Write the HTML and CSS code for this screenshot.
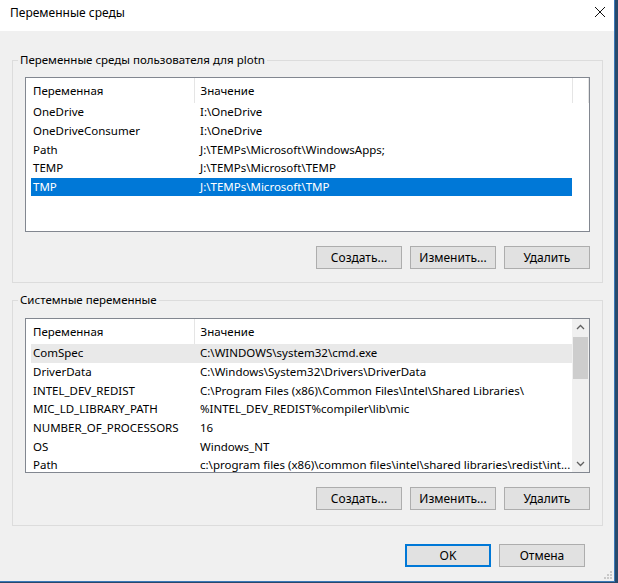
FILE: index.html
```html
<!DOCTYPE html>
<html lang="ru">
<head>
    <meta charset="UTF-8">
    <title>Переменные среды</title>
    <link rel="stylesheet" href="styles.css">
</head>
<body>
    <div class="window">
        <div class="titlebar">
            <span class="title">Переменные среды</span>
            <svg class="close" width="12" height="12" viewBox="0 0 12 12">
                <path d="M1 1 L11 11 M11 1 L1 11" stroke="#111" stroke-width="1" fill="none"/>
            </svg>
        </div>

        <div class="content">
            <fieldset class="group">
                <legend>Переменные среды пользователя для plotn</legend>
                <div class="list">
                    <div class="list-body">
                        <table>
                            <colgroup><col class="c1"><col class="c2"><col></colgroup>
                            <thead>
                                <tr><th>Переменная</th><th>Значение</th><th></th></tr>
                            </thead>
                            <tbody>
                                <tr><td>OneDrive</td><td>I:\OneDrive</td><td></td></tr>
                                <tr><td>OneDriveConsumer</td><td>I:\OneDrive</td><td></td></tr>
                                <tr><td>Path</td><td>J:\TEMPs\Microsoft\WindowsApps;</td><td></td></tr>
                                <tr><td>TEMP</td><td>J:\TEMPs\Microsoft\TEMP</td><td></td></tr>
                                <tr class="selected"><td>TMP</td><td>J:\TEMPs\Microsoft\TMP</td><td></td></tr>
                            </tbody>
                        </table>
                    </div>
                </div>
                <div class="buttons">
                    <button>Создать...</button>
                    <button>Изменить...</button>
                    <button>Удалить</button>
                </div>
            </fieldset>

            <fieldset class="group system">
                <legend>Системные переменные</legend>
                <div class="list">
                    <div class="list-body">
                        <table>
                            <colgroup><col class="c1"><col class="c2"><col></colgroup>
                            <thead>
                                <tr><th>Переменная</th><th>Значение</th><th class="last"></th></tr>
                            </thead>
                            <tbody>
                                <tr class="hover"><td>ComSpec</td><td>C:\WINDOWS\system32\cmd.exe</td><td></td></tr>
                                <tr><td>DriverData</td><td>C:\Windows\System32\Drivers\DriverData</td><td></td></tr>
                                <tr><td>INTEL_DEV_REDIST</td><td>C:\Program Files (x86)\Common Files\Intel\Shared Libraries\</td><td></td></tr>
                                <tr><td>MIC_LD_LIBRARY_PATH</td><td>%INTEL_DEV_REDIST%compiler\lib\mic</td><td></td></tr>
                                <tr><td>NUMBER_OF_PROCESSORS</td><td>16</td><td></td></tr>
                                <tr><td>OS</td><td>Windows_NT</td><td></td></tr>
                                <tr><td>Path</td><td>c:\program files (x86)\common files\intel\shared libraries\redist\int...</td><td></td></tr>
                            </tbody>
                        </table>
                    </div>
                    <div class="scrollbar">
                        <svg class="arrow" width="17" height="17" viewBox="0 0 17 17">
                            <path d="M5 10 L8.5 6.5 L12 10" stroke="#606060" stroke-width="1.3" fill="none"/>
                        </svg>
                        <div class="track"><div class="thumb"></div></div>
                        <svg class="arrow" width="17" height="17" viewBox="0 0 17 17">
                            <path d="M5 7 L8.5 10.5 L12 7" stroke="#606060" stroke-width="1.3" fill="none"/>
                        </svg>
                    </div>
                </div>
                <div class="buttons">
                    <button>Создать...</button>
                    <button>Изменить...</button>
                    <button>Удалить</button>
                </div>
            </fieldset>

            <div class="dialog-buttons">
                <button class="default">OK</button>
                <button>Отмена</button>
            </div>
            <svg class="grip" width="8" height="8" viewBox="0 0 8 8">
                <rect x="6" y="0" width="2" height="2" fill="#c8c8c8"/>
                <rect x="3" y="3" width="2" height="2" fill="#c8c8c8"/>
                <rect x="6" y="3" width="2" height="2" fill="#c8c8c8"/>
                <rect x="0" y="6" width="2" height="2" fill="#c8c8c8"/>
                <rect x="3" y="6" width="2" height="2" fill="#c8c8c8"/>
                <rect x="6" y="6" width="2" height="2" fill="#c8c8c8"/>
            </svg>
        </div>
    </div>
</body>
</html>
```

FILE: styles.css
```css
body {
    margin: 0;
    background: #27496b;
    font-family: "Noto Sans", "Open Sans", sans-serif;
    font-size: 11.5px;
    color: #000;
}
.window {
    width: 614px;
    height: 581px;
    background: #f0f0f0;
    border-right: 1px solid #3b78b8;
    border-bottom: 1px solid #3b78b8;
    display: flex;
    flex-direction: column;
}
.titlebar {
    height: 31px;
    background: #fff;
    display: flex;
    align-items: center;
    justify-content: space-between;
    padding: 0 8px 7px 10px;
    box-sizing: border-box;
}
.title {
    font-size: 12px;
}
.content {
    flex: 1;
    padding: 21px 11px 0 12px;
    display: flex;
    flex-direction: column;
    position: relative;
}
.group {
    margin: 0 0 9px 0;
    padding: 9px 12px 13px 12px;
    border: 1px solid #dcdcdc;
    min-width: 0;
}
.group.system {
    padding-top: 10px;
    padding-bottom: 15px;
}
.group legend {
    margin-left: -7px;
    padding: 0 2px;
    line-height: 16px;
}
.list {
    height: 155px;
    box-sizing: border-box;
    border: 1px solid #828790;
    background: #fff;
    display: flex;
    overflow: hidden;
}
.list-body {
    flex: 1;
    padding-left: 5px;
    overflow: hidden;
}
table {
    width: 100%;
    border-collapse: collapse;
    table-layout: fixed;
}
col.c1 {
    width: 163px;
}
col.c2 {
    width: 378px;
}
th {
    height: 25px;
    padding: 0 0 0 2px;
    font-weight: normal;
    text-align: left;
    border-right: 1px solid #e5e5e5;
    box-sizing: border-box;
}
th:nth-child(2) {
    padding-left: 6px;
}
th.last {
    border-right: none;
}
thead tr {
    height: 25px;
}
td {
    height: 18.7px;
    padding: 0 0 0 2px;
    white-space: nowrap;
    overflow: hidden;
    line-height: 18px;
}
td:nth-child(2) {
    padding-left: 6px;
}
tr.selected td:nth-child(-n+2) {
    background: #0078d7;
    color: #fff;
}
tr.hover td:nth-child(-n+2) {
    background: #e9e9e9;
}
.scrollbar {
    width: 17px;
    background: #f0f0f0;
    display: flex;
    flex-direction: column;
}
.arrow {
    display: block;
    flex: none;
}
.track {
    flex: 1;
    padding: 1px 1px 0 1px;
}
.thumb {
    height: 42px;
    background: #cdcdcd;
}
.buttons {
    display: flex;
    justify-content: flex-end;
    gap: 8px;
    margin-top: 14px;
}
button {
    width: 86px;
    height: 23px;
    background: #e1e1e1;
    border: 1px solid #adadad;
    font-family: inherit;
    font-size: 12px;
    color: #000;
    padding: 0;
}
.dialog-buttons {
    display: flex;
    justify-content: flex-end;
    gap: 8px;
    margin-top: 9px;
    padding-right: 18px;
}
.dialog-buttons button {
    width: 86px;
}
button.default {
    border: 2px solid #0078d7;
}
.grip {
    position: absolute;
    right: 2px;
    bottom: 2px;
}
```
